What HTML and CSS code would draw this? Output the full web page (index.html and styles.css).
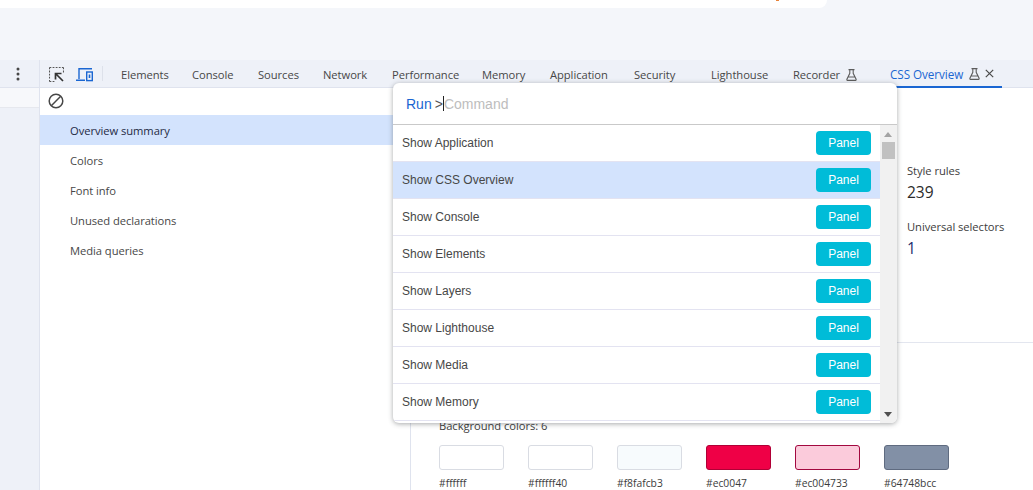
FILE: index.html
```html
<!DOCTYPE html>
<html lang="en">
<head>
<meta charset="utf-8">
<title>CSS Overview</title>
<link rel="stylesheet" href="styles.css">
</head>
<body>
<div class="page">
  <div class="browser-top"><div class="page-sheet"><span class="orange-mark"></span></div></div>
  <div class="toolbar">
    <div class="menu-cell">
      <svg class="icon-dots" width="4" height="14" viewBox="0 0 4 14"><circle cx="2" cy="2" r="1.5"/><circle cx="2" cy="7" r="1.5"/><circle cx="2" cy="12" r="1.5"/></svg>
    </div>
    <div class="tool-icons">
      <svg width="15" height="15" viewBox="0 0 15 15" fill="none" stroke="#555" stroke-width="1.1"><path d="M.5 .5h14M.5 .5v14M.5 14.500h5M14.500 .5v5" stroke-dasharray="1.800 1.300"/><path d="M14 14 7 7M6.500 12.500V6.500h6" stroke="#333" stroke-width="1.700"/></svg>
      <svg width="17" height="15" viewBox="0 0 17 15" fill="none" stroke="#1a66d2" stroke-width="1.400"><path d="M3 12V1.700h13M0 13.300h9"/><rect x="10.700" y="5" width="5.600" height="8.600"/><rect x="12.700" y="7.500" width="1.600" height="3.500" fill="#1a66d2" stroke="none"/></svg>
    </div>
    <nav class="tabs">
      <span class="tab t-elements">Elements</span>
      <span class="tab t-console">Console</span>
      <span class="tab t-sources">Sources</span>
      <span class="tab t-network">Network</span>
      <span class="tab t-performance">Performance</span>
      <span class="tab t-memory">Memory</span>
      <span class="tab t-application">Application</span>
      <span class="tab t-security">Security</span>
      <span class="tab t-lighthouse">Lighthouse</span>
      <span class="tab t-recorder">Recorder
        <svg class="flask" width="11" height="12" viewBox="0 0 11 12" fill="none" stroke="#5c5c5c" stroke-width="1.100"><path d="M2.500.6h6M3.800.6v3.700L.9 10.300q-.3 1 .6 1.100h8q.9-.1.6-1.100L7.200 4.300V.6M2.600 8h5.800"/></svg>
      </span>
      <span class="tab active">CSS Overview
        <svg class="flask" width="11" height="12" viewBox="0 0 11 12" fill="none" stroke="#5c5c5c" stroke-width="1.100"><path d="M2.500.6h6M3.800.6v3.700L.9 10.300q-.3 1 .6 1.100h8q.9-.1.6-1.100L7.200 4.300V.6M2.600 8h5.800"/></svg>
        <svg class="close" width="9" height="9" viewBox="0 0 9 9" fill="none" stroke="#4a4a4a" stroke-width="1.200"><path d="M.8.8l7.400 7.400M8.200.8.800 8.200"/></svg>
      </span>
    </nav>
  </div>
  <div class="main">
    <div class="left-strip"><div class="strip-head"></div></div>
    <aside class="sidebar">
      <div class="clear-row">
        <svg width="16" height="16" viewBox="0 0 16 16" fill="none" stroke="#474747" stroke-width="1.500"><circle cx="8" cy="8" r="6.800"/><path d="M3.300 12.700 12.700 3.300"/></svg>
      </div>
      <ul class="nav-list">
        <li class="selected">Overview summary</li>
        <li>Colors</li>
        <li>Font info</li>
        <li>Unused declarations</li>
        <li>Media queries</li>
      </ul>
    </aside>
    <section class="content">
      <div class="summary">
        <div class="stat"><div class="stat-label">Style rules</div><div class="stat-value">239</div></div>
        <div class="stat"><div class="stat-label">Universal selectors</div><div class="stat-value accent">1</div></div>
      </div>
      <div class="colors">
        <div class="bg-title">Background colors: 6</div>
        <div class="swatches">
          <div class="swatch"><div class="chip c1"></div><span>#ffffff</span></div>
          <div class="swatch"><div class="chip c2"></div><span>#ffffff40</span></div>
          <div class="swatch"><div class="chip c3"></div><span>#f8fafcb3</span></div>
          <div class="swatch"><div class="chip c4"></div><span>#ec0047</span></div>
          <div class="swatch"><div class="chip c5"></div><span>#ec004733</span></div>
          <div class="swatch"><div class="chip c6"></div><span>#64748bcc</span></div>
        </div>
      </div>
    </section>
  </div>
  <div class="palette">
    <div class="prompt"><span class="run">Run</span><span class="gt">&gt;</span><span class="caret"></span><span class="placeholder">Command</span></div>
    <div class="results">
      <ul class="commands">
        <li><span>Show Application</span><b class="panel-btn">Panel</b></li>
        <li class="current"><span>Show CSS Overview</span><b class="panel-btn">Panel</b></li>
        <li><span>Show Console</span><b class="panel-btn">Panel</b></li>
        <li><span>Show Elements</span><b class="panel-btn">Panel</b></li>
        <li><span>Show Layers</span><b class="panel-btn">Panel</b></li>
        <li><span>Show Lighthouse</span><b class="panel-btn">Panel</b></li>
        <li><span>Show Media</span><b class="panel-btn">Panel</b></li>
        <li><span>Show Memory</span><b class="panel-btn">Panel</b></li>
      </ul>
      <div class="scrollbar"><i class="arrow up"></i><i class="thumb"></i><i class="arrow down"></i></div>
    </div>
  </div>
</div>
</body>
</html>
```

FILE: styles.css
```css
* { box-sizing: border-box; }
html, body { margin: 0; height: 100%; }
body { background: #fff; overflow: hidden; font-family: "Open Sans", "Noto Sans", sans-serif; }
ul { list-style: none; margin: 0; padding: 0; }

.page { position: relative; width: 1033px; height: 490px; overflow: hidden; display: flex; flex-direction: column; }

.browser-top { height: 60px; background: #f4f6fa; flex: none; }
.page-sheet { position: relative; width: 827px; height: 8px; background: #fff; border-bottom-right-radius: 8px; }
.orange-mark { position: absolute; left: 776px; top: 0; width: 3px; height: 1px; background: #e8833a; }

.toolbar { height: 28px; flex: none; display: flex; align-items: stretch; background: #eef1f8; border-bottom: 1px solid #dfe3ee; font-size: 12px; color: #474747; }
.menu-cell { width: 40px; flex: none; display: flex; align-items: center; padding: 0 0 0 16px; border-right: 1px solid #dfe3ee; }
.icon-dots { fill: #474747; }
.tool-icons { width: 63px; flex: none; display: flex; align-items: center; gap: 12px; padding: 1px 0 0 9px; position: relative; }
.tool-icons::after { content: ""; position: absolute; right: 0; top: 6px; bottom: 6px; width: 1px; background: #dde1ea; }

.tabs { display: flex; align-items: stretch; flex: 1; }
.tab { display: flex; align-items: center; gap: 6px; font-size: 11.200px; white-space: nowrap; flex: none; letter-spacing: -0.05px; padding-top: 2px; }
.t-elements { margin-left: 18px; width: 71px; }
.t-console { width: 66px; }
.t-sources { width: 65px; }
.t-network { width: 69px; }
.t-performance { width: 90px; }
.t-memory { width: 68px; }
.t-application { width: 84px; }
.t-security { width: 77px; }
.t-lighthouse { width: 82px; }
.t-recorder { width: 97px; }
.tab.active { width: 112px; font-size: 11.700px; color: #1a66d2; border-bottom: 2px solid #1a66d2; margin-bottom: -1px; padding-top: 1px; }
.flask { flex: none; }
.close { flex: none; margin-left: -1px; }

.main { flex: 1; display: flex; min-height: 0; }
.left-strip { width: 40px; flex: none; background: #eef1f8; border-right: 1px solid #dfe3ee; }
.strip-head { height: 20px; background: #f7f8fb; border-bottom: 1px solid #e6e8ee; }
.sidebar { width: 371px; flex: none; background: #fff; border-right: 1px solid #dfe3ee; }
.clear-row { height: 27px; display: flex; align-items: center; padding: 0 0 2px 8px; color: #474747; }
.nav-list li { height: 30px; padding-left: 30px; display: flex; align-items: center; font-size: 11.200px; letter-spacing: -0.05px; color: #474747; }
.nav-list .selected { background: #d3e3fd; color: #1f2a44; }

.content { flex: 1; display: flex; flex-direction: column; }
.summary { height: 257px; padding: 75px 0 0 496px; border-bottom: 1px solid #e3e6ef; display: flex; flex-direction: column; gap: 15px; }
.stat-label { font-size: 11.200px; line-height: 16px; color: #3c3c3c; letter-spacing: -0.05px; white-space: nowrap; }
.stat-value { font-size: 15.500px; line-height: 24px; color: #2a2a2a; margin-top: 1px; }
.stat-value.accent { color: #1a2a6c; }
.colors { padding: 75px 0 0 28px; color: #3c3c3c; }
.bg-title { line-height: 16px; font-size: 11.200px; letter-spacing: -0.05px; }
.swatches { display: flex; gap: 24px; margin-top: 11px; }
.swatch { width: 65px; flex: none; }
.swatch span { display: block; margin-top: 6px; line-height: 14px; white-space: nowrap; font-size: 10.300px; }
.chip { height: 25px; border-radius: 3px; border: 1px solid #d9dce3; background: #fff; }
.c3 { background: #f7fbfd; }
.c4 { background: #ef0046; border-color: #b00036; }
.c5 { background: #fbcbdb; border-color: #a2083f; }
.c6 { background: #8290a6; border-color: #5f6b80; }

.palette { position: absolute; left: 393px; top: 83px; width: 504px; height: 340px; background: #fff; border-radius: 6px; box-shadow: 0 1px 5px rgba(60, 64, 67, .45); font-family: "Liberation Sans", Arial, sans-serif; display: flex; flex-direction: column; overflow: hidden; }
.prompt { height: 42px; flex: none; display: flex; align-items: center; padding: 0 0 0 13px; border-bottom: 1px solid #c9c9c9; font-size: 14px; }
.run { color: #1a66d2; margin-right: 3px; }
.gt { color: #555; }
.caret { width: 1px; height: 15px; background: #222; }
.placeholder { color: #bdbdbd; }
.results { flex: 1; display: flex; min-height: 0; }
.commands { flex: 1; min-width: 0; }
.commands li { height: 37px; display: flex; align-items: center; justify-content: space-between; padding: 0 9px; border-bottom: 1px solid #e3e3f1; font-size: 12px; color: #474747; }
.commands li.current { background: #d3e3fd; }
.panel-btn { width: 55px; height: 24px; border-radius: 4px; background: #00bcd8; color: #fff; font-weight: 400; font-size: 12px; display: flex; align-items: center; justify-content: center; }
.scrollbar { width: 17px; flex: none; background: #f1f1f1; position: relative; }
.thumb { position: absolute; top: 17px; left: 2px; width: 13px; height: 17px; background: #c1c1c1; }
.arrow { position: absolute; left: 4px; width: 0; height: 0; border-left: 4px solid transparent; border-right: 4px solid transparent; }
.arrow.up { top: 7px; border-bottom: 5px solid #a3a3a3; }
.arrow.down { bottom: 6px; border-top: 5px solid #505050; }
```
